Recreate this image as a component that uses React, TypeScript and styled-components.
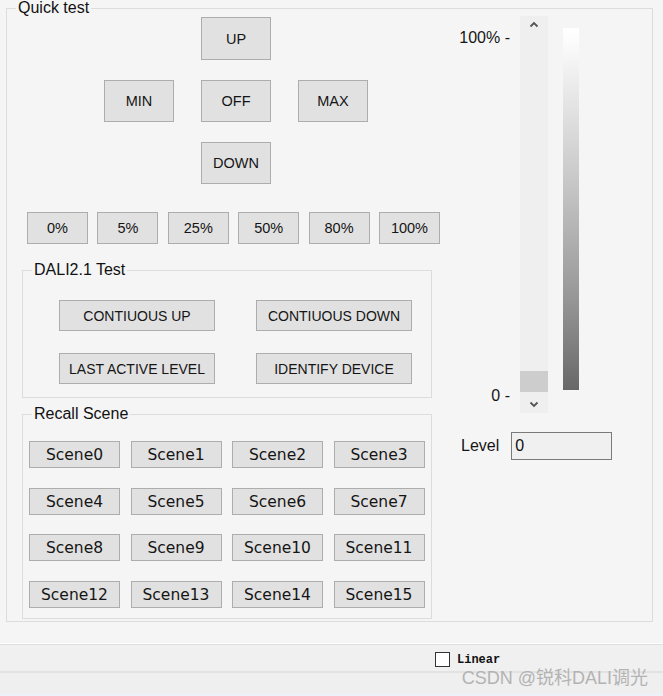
import React from 'react';
import styled, { createGlobalStyle } from 'styled-components';

const GlobalStyle = createGlobalStyle`
  body {
    margin: 0;
    background: #f5f5f5;
    font-family: "Liberation Sans", Arial, sans-serif;
    color: #151515;
  }
`;

const directions = [
  { area: 'up', label: 'UP' },
  { area: 'min', label: 'MIN' },
  { area: 'off', label: 'OFF' },
  { area: 'max', label: 'MAX' },
  { area: 'down', label: 'DOWN' },
];

const percents = ['0%', '5%', '25%', '50%', '80%', '100%'];

const daliTests = ['CONTIUOUS UP', 'CONTIUOUS DOWN', 'LAST ACTIVE LEVEL', 'IDENTIFY DEVICE'];

const scenes = Array.from({ length: 16 }, (_, i) => `Scene${i}`);

const Chevron: React.FC<{ down?: boolean }> = ({ down }) => (
  <svg width="10" height="7" viewBox="0 0 10 7">
    <path
      d={down ? 'M1.5 1.5 L5 5 L8.5 1.5' : 'M1.5 5.5 L5 2 L8.5 5.5'}
      fill="none"
      stroke="#555"
      strokeWidth="1.8"
    />
  </svg>
);

const App: React.FC = () => {
  return (
    <>
      <GlobalStyle />
      <Window>
        <Main>
          <OuterGroup>
            <GroupTitle>Quick test</GroupTitle>
            <Columns>
              <LeftColumn>
                <DirectionPad>
                  {directions.map((d) => (
                    <PadButton key={d.area} $area={d.area}>
                      {d.label}
                    </PadButton>
                  ))}
                </DirectionPad>
                <PercentRow>
                  {percents.map((p) => (
                    <PercentButton key={p}>{p}</PercentButton>
                  ))}
                </PercentRow>
                <InnerGroup $top={18}>
                  <GroupTitle>DALI2.1 Test</GroupTitle>
                  <DaliGrid>
                    {daliTests.map((t) => (
                      <DaliButton key={t}>{t}</DaliButton>
                    ))}
                  </DaliGrid>
                </InnerGroup>
                <InnerGroup $top={8}>
                  <GroupTitle>Recall Scene</GroupTitle>
                  <SceneGrid>
                    {scenes.map((s) => (
                      <SceneButton key={s}>{s}</SceneButton>
                    ))}
                  </SceneGrid>
                </InnerGroup>
              </LeftColumn>
              <RightColumn>
                <SliderRow>
                  <Marks>
                    <Mark>100% -</Mark>
                    <Mark>0 -</Mark>
                  </Marks>
                  <Track>
                    <ArrowBox>
                      <Chevron />
                    </ArrowBox>
                    <Thumb />
                    <ArrowBox>
                      <Chevron down />
                    </ArrowBox>
                  </Track>
                  <Gradient />
                </SliderRow>
                <LevelRow>
                  <LevelLabel>Level</LevelLabel>
                  <LevelInput readOnly value="0" />
                </LevelRow>
              </RightColumn>
            </Columns>
          </OuterGroup>
        </Main>
        <StatusBar>
          <CheckBox />
          <CheckLabel>Linear</CheckLabel>
        </StatusBar>
        <Footer />
        <Watermark>CSDN @锐科DALI调光</Watermark>
      </Window>
    </>
  );
};

export default App;

const Window = styled.div`
  position: relative;
  width: 663px;
  height: 696px;
  display: flex;
  flex-direction: column;
  overflow: hidden;
  background: #f5f5f5;
`;

const Main = styled.div`
  height: 644px;
  flex-shrink: 0;
  box-sizing: border-box;
  padding-left: 6px;
  border-bottom: 1px solid #ffffff;
`;

const OuterGroup = styled.fieldset`
  margin: 0;
  padding: 0 0 2px 0;
  width: 647px;
  box-sizing: border-box;
  min-width: 0;
  border: 1px solid #dcdcdc;
`;

const GroupTitle = styled.legend`
  margin-left: 9px;
  padding: 0 2px;
  font-size: 16px;
  line-height: 16px;
  color: #111;
`;

const Columns = styled.div`
  display: grid;
  grid-template-columns: 448px 1fr;
`;

const LeftColumn = styled.div`
  display: flex;
  flex-direction: column;
  padding-top: 1px;
`;

const DirectionPad = styled.div`
  display: grid;
  grid-template-columns: repeat(3, 70px);
  grid-template-rows: 43px 42px 42px;
  grid-template-areas:
    '. up .'
    'min off max'
    '. down .';
  column-gap: 27px;
  row-gap: 20px;
  margin-left: 97px;
`;

const WinButton = styled.div`
  display: flex;
  align-items: center;
  justify-content: center;
  box-sizing: border-box;
  background: #e1e1e1;
  border: 1px solid #adadad;
  color: #151515;
  font-size: 14.5px;
  white-space: nowrap;
`;

const PadButton = styled(WinButton)<{ $area: string }>`
  grid-area: ${(p) => p.$area};
`;

const PercentRow = styled.div`
  display: flex;
  justify-content: space-between;
  width: 413px;
  margin: 28px 0 0 20px;
`;

const PercentButton = styled(WinButton)`
  width: 61px;
  height: 32px;
`;

const InnerGroup = styled.fieldset<{ $top: number }>`
  margin: ${(p) => p.$top}px 0 0 15px;
  padding: 0;
  width: 410px;
  box-sizing: border-box;
  min-width: 0;
  border: 1px solid #dcdcdc;
`;

const DaliGrid = styled.div`
  display: grid;
  grid-template-columns: 156px 156px;
  grid-auto-rows: 31px;
  column-gap: 41px;
  row-gap: 22px;
  padding: 22px 0 13px 36px;
`;

const DaliButton = styled(WinButton)`
  font-size: 14px;
`;

const SceneGrid = styled.div`
  display: grid;
  grid-template-columns: repeat(4, 91px);
  grid-auto-rows: 27px;
  column-gap: 10.5px;
  row-gap: 19.5px;
  padding: 19px 0 10px 6px;
`;

const SceneButton = styled(WinButton)`
  font-family: "DejaVu Sans", sans-serif;
  font-size: 15.5px;
  padding-top: 1px;
`;

const RightColumn = styled.div`
  display: flex;
  flex-direction: column;
`;

const SliderRow = styled.div`
  display: flex;
  align-items: flex-start;
`;

const Marks = styled.div`
  width: 55px;
  height: 397px;
  box-sizing: border-box;
  padding: 14px 0 9px;
  display: flex;
  flex-direction: column;
  justify-content: space-between;
  align-items: flex-end;
`;

const Mark = styled.div`
  font-size: 16px;
  line-height: 16px;
  white-space: nowrap;
`;

const Track = styled.div`
  margin-left: 10px;
  width: 28px;
  height: 397px;
  display: flex;
  flex-direction: column;
  background: #efefef;
`;

const ArrowBox = styled.div`
  height: 17px;
  display: flex;
  align-items: center;
  justify-content: center;
`;

const Thumb = styled.div`
  margin-top: auto;
  margin-bottom: 4px;
  height: 21px;
  background: #cdcdcd;
`;

const Gradient = styled.div`
  margin: 12px 0 0 15px;
  width: 16px;
  height: 362px;
  background: linear-gradient(
    to bottom,
    #ffffff 0%,
    #fbfbfb 4%,
    #ececec 15%,
    #c4c4c4 45%,
    #969696 75%,
    #686868 100%
  );
`;

const LevelRow = styled.div`
  display: flex;
  align-items: center;
  gap: 12px;
  margin: 19px 0 0 6px;
`;

const LevelLabel = styled.span`
  font-size: 16px;
`;

const LevelInput = styled.input`
  width: 101px;
  height: 28px;
  box-sizing: border-box;
  margin: 0;
  padding: 0 3px;
  border: 1px solid #7a7a7a;
  background: #f0f0f0;
  font-family: "Liberation Sans", Arial, sans-serif;
  font-size: 16px;
  color: #111;
  outline: none;
`;

const StatusBar = styled.div`
  height: 27px;
  flex-shrink: 0;
  box-sizing: border-box;
  display: flex;
  align-items: flex-start;
  padding: 7px 0 0 435px;
  background: #f0f0f0;
  border-top: 1px solid #dedede;
`;

const CheckBox = styled.div`
  width: 15px;
  height: 15px;
  box-sizing: border-box;
  border: 1px solid #333;
  background: #fff;
`;

const CheckLabel = styled.span`
  margin-left: 7px;
  font-family: "Liberation Mono", monospace;
  font-weight: bold;
  font-size: 12px;
  line-height: 16px;
  color: #111;
`;

const Footer = styled.div`
  flex: 1;
  background: #efefef;
  border-top: 2px solid #e2e2e2;
  border-bottom: 2px solid #edf2f8;
`;

const Watermark = styled.div`
  position: absolute;
  right: 15px;
  bottom: 7px;
  font-family: "Liberation Sans", "Noto Sans CJK SC", sans-serif;
  font-size: 18px;
  line-height: 22px;
  color: #b3b3b3;
  white-space: nowrap;
`;
